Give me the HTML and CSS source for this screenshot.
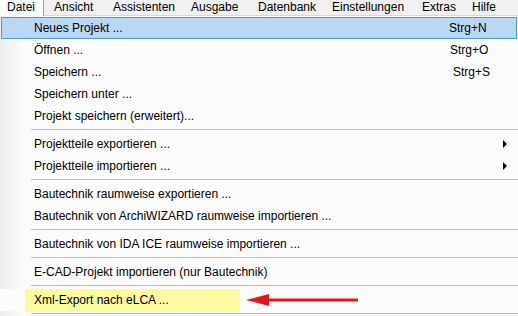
FILE: index.html
```html
<!DOCTYPE html>
<html>
<head>
<meta charset="utf-8">
<link rel="stylesheet" href="styles.css">
</head>
<body>
<div class="menubar">
  <div class="mb-item active">Datei</div>
  <div class="mb-item w-ansicht">Ansicht</div>
  <div class="mb-item w-assist">Assistenten</div>
  <div class="mb-item w-ausgabe">Ausgabe</div>
  <div class="mb-item w-daten">Datenbank</div>
  <div class="mb-item w-einst">Einstellungen</div>
  <div class="mb-item w-extras">Extras</div>
  <div class="mb-item">Hilfe</div>
</div>
<div class="dropdown">
  <div class="item hover"><span class="label">Neues Projekt ...</span><span class="sc">Strg+N</span></div>
  <div class="item"><span class="label">Öffnen ...</span><span class="sc">Strg+O</span></div>
  <div class="item"><span class="label">Speichern ...</span><span class="sc sc-s">Strg+S</span></div>
  <div class="item"><span class="label">Speichern unter ...</span></div>
  <div class="item"><span class="label">Projekt speichern (erweitert)...</span></div>
  <div class="sep"></div>
  <div class="item"><span class="label">Projektteile exportieren ...</span><span class="arrow"></span></div>
  <div class="item"><span class="label">Projektteile importieren ...</span><span class="arrow"></span></div>
  <div class="sep"></div>
  <div class="item"><span class="label">Bautechnik raumweise exportieren ...</span></div>
  <div class="item"><span class="label">Bautechnik von ArchiWIZARD raumweise importieren ...</span></div>
  <div class="sep"></div>
  <div class="item"><span class="label">Bautechnik von IDA ICE raumweise importieren ...</span></div>
  <div class="sep"></div>
  <div class="item"><span class="label">E-CAD-Projekt importieren (nur Bautechnik)</span></div>
  <div class="sep"></div>
  <div class="item mark"><span class="label">Xml-Export nach eLCA ...</span>
    <svg class="red-arrow" width="114" height="14" viewBox="0 0 114 14"><polygon points="0,7 23,1 23,5.5 112,5.5 112,8.5 23,8.5 23,13" fill="#e8141c"/></svg>
  </div>
  <div class="sep"></div>
</div>
</body>
</html>
```
FILE: styles.css
```css
html, body {
  margin: 0;
  padding: 0;
  width: 518px;
  height: 316px;
  overflow: hidden;
  background: #fcfcfc;
  font-family: "Liberation Sans", Arial, sans-serif;
  font-size: 12px;
  color: #000;
}
.menubar {
  display: flex;
  height: 15px;
  background: #f0f0f0;
  border-bottom: 1px solid #d9d9d9;
  line-height: 14px;
}
.mb-item {
  padding-left: 7px;
}
.mb-item.active {
  width: 36px;
  background: #fcfcfc;
  border-right: 1px solid #a0a0a0;
  height: 16px;
}
.w-ansicht { width: 52px; padding-left: 10px; }
.w-assist { width: 71px; }
.w-ausgabe { width: 60px; }
.w-daten { width: 67px; }
.w-einst { width: 83px; }
.w-extras { width: 43px; }
.dropdown {
  position: relative;
  padding-top: 1px;
  background: linear-gradient(to right, #efefef 0px, #f6f6f6 14px, #fcfcfc 24px);
}
.item {
  height: 22px;
  display: flex;
  align-items: center;
  position: relative;
  margin-left: 24px;
  padding-left: 10px;
  background: #fcfcfc;
}
.item .label { flex: 1; }
.item .sc {
  width: 68px;
}
.item .sc-s { padding-left: 3px; width: 65px; }
.item.hover {
  margin-left: 1px;
  margin-right: 1px;
  padding-left: 32px;
  background: #b9d8f4;
  border: 1px solid #4a9be0;
  height: 20px;
}
.item.hover .sc { width: 67px; }
.arrow {
  width: 0;
  height: 0;
  border-top: 4px solid transparent;
  border-bottom: 4px solid transparent;
  border-left: 4px solid #000;
  margin-right: 11px;
}
.sep {
  height: 6px;
  margin-left: 31px;
  background: linear-gradient(#fcfcfc 2px, #bdbdbd 2px, #bdbdbd 3px, #fcfcfc 3px);
}
.item.mark {
  margin-left: 0;
  padding-left: 0;
  background: #fcfcfc;
}
.item.mark .label {
  flex: none;
  margin-left: 25px;
  width: 206px;
  padding-left: 9px;
  height: 23px;
  line-height: 23px;
  background: #fdfba0;
}
.red-arrow {
  margin-left: 6px;
}
```
